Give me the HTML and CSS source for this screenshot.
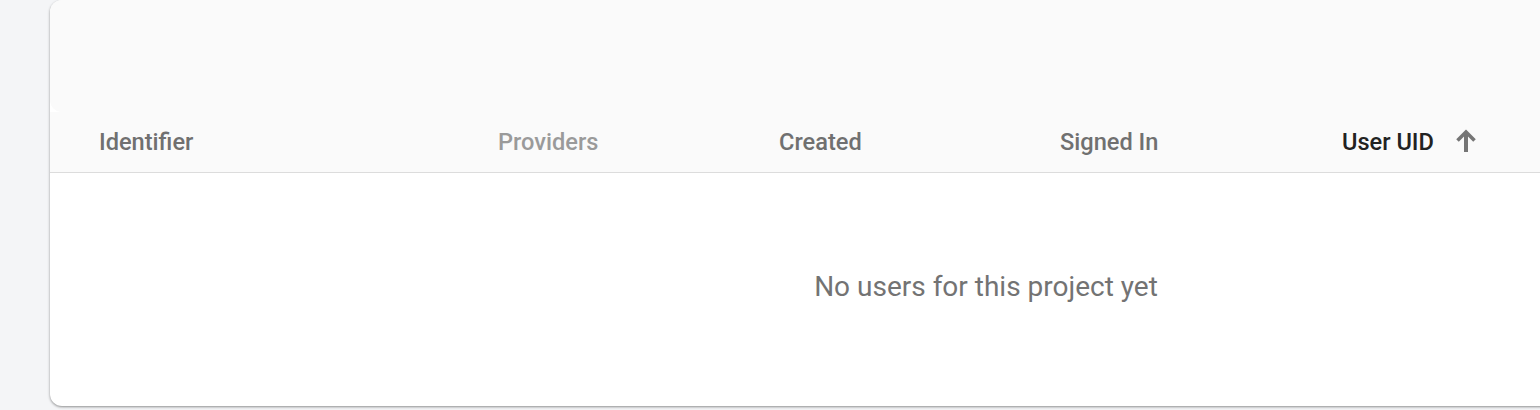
FILE: index.html
```html
<!DOCTYPE html>
<html>
<head>
<meta charset="utf-8">
<link rel="stylesheet" href="styles.css">
</head>
<body>
<div class="viewport">
  <div class="card">
    <div class="toolbar"></div>
    <div class="header">
      <div class="col col-id">Identifier</div>
      <div class="col col-prov">Providers</div>
      <div class="col col-created">Created</div>
      <div class="col col-signed">Signed In</div>
      <div class="col col-uid">User UID
        <svg class="sort" viewBox="0 0 22 24" width="22" height="24"><path class="shaft" d="M11 4V23"/><path class="head" d="M2.5 11.5L11 3L19.5 11.5"/></svg>
      </div>
    </div>
    <div class="empty">No users for this project yet</div>
  </div>
</div>
</body>
</html>
```
FILE: styles.css
```css
html, body {
  margin: 0;
  padding: 0;
  background: #f4f5f7;
  overflow: hidden;
}
.viewport {
  width: 1540px;
  height: 410px;
  overflow: hidden;
  padding-left: 50px;
  box-sizing: border-box;
}
.card {
  width: 1872px;
  height: 406px;
  background: #ffffff;
  border-radius: 12px;
  box-shadow: 0 1px 3px rgba(0,0,0,0.3), 0 1px 2px rgba(0,0,0,0.15);
  display: flex;
  flex-direction: column;
  font-family: Roboto, "Liberation Sans", sans-serif;
}
.toolbar {
  height: 112px;
  background: #fafafa;
  border-radius: 12px;
}
.header {
  height: 60px;
  background: #fafafa;
  border-bottom: 1px solid #dcdcdc;
  display: flex;
  align-items: center;
  padding-left: 49px;
  font-size: 23.6px;
  font-weight: 500;
  color: #707070;
}
.col-id { width: 399px; }
.col-prov { width: 281px; color: #9a9a9a; }
.col-created { width: 281px; }
.col-signed { width: 282px; }
.col-uid {
  color: #222222;
  display: flex;
  align-items: center;
}
.sort {
  fill: none;
  stroke: #757575;
  margin-left: 21px;
  margin-top: -3px;
}
.shaft { stroke-width: 4; }
.head { stroke-width: 3.6; stroke-linejoin: miter; }
.empty {
  flex: 1;
  display: flex;
  align-items: center;
  justify-content: center;
  padding-bottom: 6px;
  font-size: 28px;
  color: #737373;
}
```
